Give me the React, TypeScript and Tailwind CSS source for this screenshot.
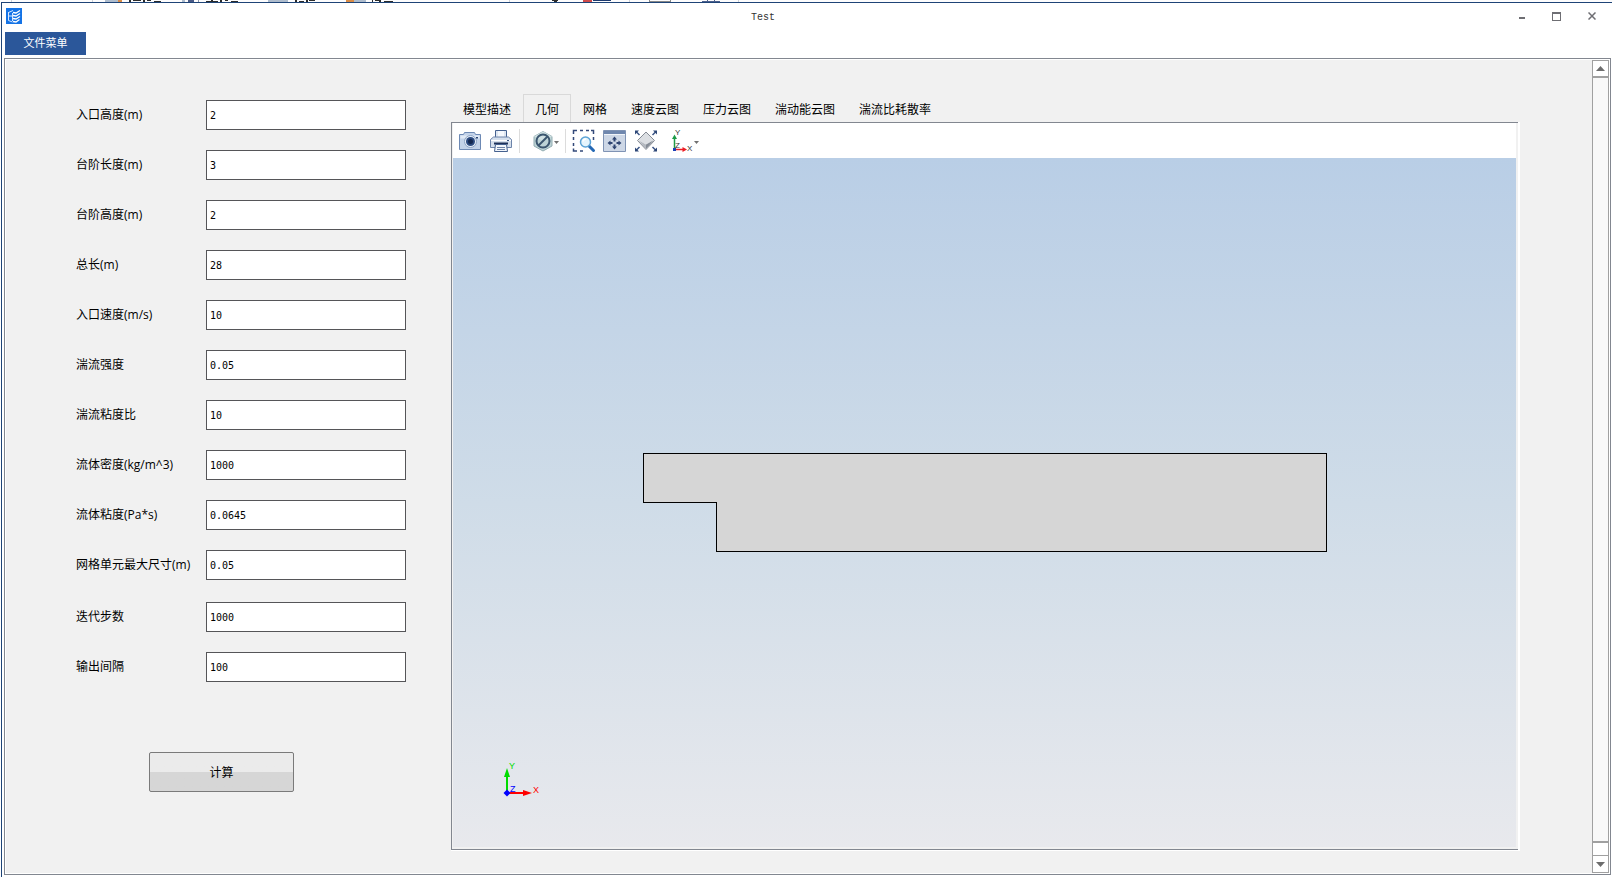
import React, { useState } from 'react';

interface Field {
  id: string;
  label: string;
  value: string;
}

const MODEL_FIELDS: Field[] = [
  { id: 'inletHeight', label: '入口高度(m)', value: '2' },
  { id: 'stepLength', label: '台阶长度(m)', value: '3' },
  { id: 'stepHeight', label: '台阶高度(m)', value: '2' },
  { id: 'totalLength', label: '总长(m)', value: '28' },
  { id: 'inletVelocity', label: '入口速度(m/s)', value: '10' },
  { id: 'turbIntensity', label: '湍流强度', value: '0.05' },
  { id: 'turbViscosity', label: '湍流粘度比', value: '10' },
  { id: 'density', label: '流体密度(kg/m^3)', value: '1000' },
  { id: 'viscosity', label: '流体粘度(Pa*s)', value: '0.0645' },
  { id: 'meshSize', label: '网格单元最大尺寸(m)', value: '0.05' },
];

const SOLVER_FIELDS: Field[] = [
  { id: 'iterations', label: '迭代步数', value: '1000' },
  { id: 'interval', label: '输出间隔', value: '100' },
];

const TABS = ['模型描述', '几何', '网格', '速度云图', '压力云图', '湍动能云图', '湍流比耗散率'];

const FieldRow: React.FC<{ field: Field }> = ({ field }) => (
  <div className="flex h-[30px] items-center">
    <label htmlFor={field.id} className="w-[130px] shrink-0 whitespace-nowrap">
      {field.label}
    </label>
    <input
      id={field.id}
      type="text"
      defaultValue={field.value}
      className="h-[30px] w-[200px] border border-[#555558] bg-white px-[3px] font-['DejaVu_Sans_Mono',monospace] text-[10px] text-black outline-none"
    />
  </div>
);

// Slice of the parent application that shows above the window
const Backdrop: React.FC = () => (
  <svg className="h-[2px] w-full" height="2" aria-hidden="true" shapeRendering="crispEdges">
    <rect width="100%" height="2" fill="#fdfdfe" />
    <path d="M11.5 0v2M92.5 0v2M509.5 0v2M629.5 0v2M738.5 0v2" stroke="#cfd2d8" />
    <path d="M105 0h13v2h-13zM182 0h3v2h-3zM268 0h20v2h-20zM353 0h13v2h-13z" fill="#aebccd" />
    <path d="M118 0h4v2h-4zM346 0h8v2h-8z" fill="#d98b45" />
    <path d="M188 0h6v2h-6z" fill="#4a5a86" />
    <path d="M198 0h1v2h-1z" fill="#8a93a8" />
    <path
      d="M129 0h2v2h-2zM133 0h8v1h-8zM143 0h2v2h-2zM147 0h4v1h-4zM154 1h7v1h-7zM206 1h12v1h-12zM211 0h2v2h-2zM220 0h2v2h-2zM225 0h3v1h-3zM231 1h7v1h-7zM295 0h2v2h-2zM299 1h5v1h-5zM306 0h2v2h-2zM309 0h6v1h-6zM372 0h1v2h-1zM375 0h6v1h-6zM379 0h2v2h-2zM384 1h9v1h-9zM552 0h6v1h-6zM554 1h3v1h-3z"
      fill="#2b2b2b"
    />
    <path d="M583 0h9v2h-9z" fill="#d04a4a" />
    <path d="M593 0h18v1h-18z" fill="#1d3a6e" />
    <path d="M649 0h1v2h-1zM670 0h1v2h-1zM650 1h20v1h-20z" fill="#888" />
    <path d="M702 1h18v1h-18zM707 0h1v2h-1zM714 0h1v2h-1z" fill="#4b5f8c" />
  </svg>
);

const AppLogo: React.FC = () => (
  <svg width="16" height="16" viewBox="0 0 16 16" fill="none" aria-hidden="true">
    <rect width="16" height="16" fill="#1473e6" />
    <path d="M2.5 4v8.500l4 1.500M2.500 4.500L7 2.500M2.500 8h4M6.500 5v8" stroke="#d6e7ff" />
    <path d="M7 4.500l3 .5 4-2.500M7 7.500l3 .5 4-2.500M7 10.500l3 .5 4-2.500M7 13.500l3 .5 3.500-2.500" stroke="#fff" strokeWidth="1.300" />
  </svg>
);

const CameraIcon: React.FC = () => (
  <svg width="24" height="24" viewBox="0 0 24 24" fill="none">
    <path d="M1.500 5.500h4l1-2h10l1 2h5v15h-21z" fill="#c3d3e9" stroke="#6d89b4" />
    <path d="M2.500 6.500h19v3h-19z" fill="#e2ebf6" />
    <circle cx="12.500" cy="12.500" r="6" fill="#e8eff8" stroke="#8ba3c5" />
    <circle cx="12.500" cy="12.500" r="4.500" fill="#2c4b80" />
    <circle cx="12.500" cy="12.500" r="2.500" fill="#142850" />
    <path d="M18 8h2v1.500h-2z" fill="#2b4675" />
  </svg>
);

const PrinterIcon: React.FC = () => (
  <svg width="24" height="24" viewBox="0 0 24 24" fill="none">
    <path d="M6.500 9V1.500h11V9" fill="#f5f8fc" stroke="#45618f" />
    <path d="M8 2v6M16 2v6" stroke="#c5d2e4" />
    <path d="M1.500 10.500l3-2.500h15l3 2.500v8h-21z" fill="#d5dfec" stroke="#6d84aa" />
    <path d="M2 11.500h20" stroke="#fff" />
    <path d="M5 14.500h14" stroke="#1d3159" strokeWidth="2" />
    <path d="M6.500 15.500h11l1 7h-13z" fill="#f2f6fb" stroke="#45618f" />
    <path d="M8 18.500h8M8 20.500h8" stroke="#6c83a8" />
    <path d="M18 11.500h2" stroke="#3a5584" />
  </svg>
);

const HideIcon: React.FC = () => (
  <svg width="33" height="24" viewBox="0 0 33 24" fill="none">
    <path d="M17 2.500l9 5v9.500l-9 5-9-5V7.500z" fill="#bdd3d6" stroke="#93adb2" />
    <path d="M17 2.500l9 5-9 4.500-9-4.500z" fill="#d0e0e2" />
    <circle cx="17" cy="12" r="6.500" stroke="#3b566f" strokeWidth="2" />
    <path d="M12.500 16.500L21.500 7.500" stroke="#3b566f" strokeWidth="2" />
    <path d="M28 12h5l-2.500 3z" fill="#707070" />
  </svg>
);

const ZoomBoxIcon: React.FC = () => (
  <svg width="24" height="24" viewBox="0 0 24 24" fill="none">
    <path
      d="M1.500 5V1.500H5M8 1.500h3M14 1.500h3M19 1.500h2.500V5M1.500 8v3M1.500 14v3M1.500 19.500V22H5M8 22h3M21.500 8v3"
      stroke="#33497a"
      strokeWidth="1.500"
    />
    <path d="M17 17l4.500 4.500" stroke="#2468b4" strokeWidth="3" strokeLinecap="round" />
    <circle cx="13.500" cy="13" r="5" fill="#e5f5fd" stroke="#5ba3d6" strokeWidth="1.500" />
    <path d="M11 12.500a3 3 0 0 1 3-2.500" stroke="#fff" strokeWidth="1.500" />
  </svg>
);

const ExtentsIcon: React.FC = () => (
  <svg width="24" height="24" viewBox="0 0 24 24" fill="none">
    <path d="M.5 1.500h22v21H.5z" fill="#cdd7e6" stroke="#7f93b4" />
    <path d="M1 2h21v3H1z" fill="#6f87ae" />
    <path d="M1 5.500h21" stroke="#f0f4f9" />
    <path d="M11.500 7.500l2.500 3h-1.500v2h-2v-2H9zM11.500 20.500L9 17.500h1.500v-2h2v2H14zM4.500 14L7.500 11.500V13h2v2h-2v1.500zM18.500 14l-3-2.500V13h-2v2h2v1.500z" fill="#2f4573" />
  </svg>
);

const DiamondIcon: React.FC = () => (
  <svg width="24" height="24" viewBox="0 0 24 24" fill="none">
    <path d="M12 3l8 8-8 4.500L4 11z" fill="#dcdfe3" />
    <path d="M4 11l8 4.500V20z" fill="#b3b8bf" />
    <path d="M20 11l-8 4.500V20z" fill="#858c96" />
    <path d="M12 3l8.500 8.500L12 20.500 3.500 11.500z" stroke="#858b94" />
    <path d="M2 2.500l3.500 3.500M22 2.500l-3.500 3.500M2 21.500l3.500-3.500M22 21.500l-3.500-3.500" stroke="#3c5585" strokeWidth="1.500" />
    <path d="M1 1.500h4L1 5.500zM23 1.500v4L19 1.500zM1 22.500v-4l4 4zM23 22.500h-4l4-4z" fill="#2c4677" />
  </svg>
);

const AxesIcon: React.FC = () => (
  <svg width="34" height="24" viewBox="0 0 34 24" fill="none">
    <path d="M9.500 20V9" stroke="#1d9a47" strokeWidth="1.500" />
    <path d="M9.500 5.500L12 10H7z" fill="#1d9a47" />
    <path d="M10 20.500h8" stroke="#ec1c24" strokeWidth="1.500" />
    <path d="M22 20.500L17.500 18v5z" fill="#ec1c24" />
    <path d="M8 19h3v3H8z" fill="#1b3fb5" />
    <g className="font-['Liberation_Sans',sans-serif] text-[8px]" fill="#333">
      <text x="10" y="6">Y</text>
      <text x="10" y="19">Z</text>
      <text x="22" y="22">X</text>
    </g>
    <path d="M29 12h5l-2.500 3z" fill="#707070" />
  </svg>
);

const ToolSeparator: React.FC = () => <div className="-mx-px h-6 w-px bg-[#dcdcdc]" />;

const ToolBar: React.FC = () => (
  <div className="flex h-[35px] items-center gap-[7px] bg-white pl-[5px]">
    <button type="button" aria-label="截图"><CameraIcon /></button>
    <button type="button" aria-label="打印"><PrinterIcon /></button>
    <ToolSeparator />
    <button type="button" aria-label="隐藏"><HideIcon /></button>
    <ToolSeparator />
    <button type="button" aria-label="框选缩放"><ZoomBoxIcon /></button>
    <button type="button" aria-label="缩放到窗口"><ExtentsIcon /></button>
    <button type="button" aria-label="缩放到对象"><DiamondIcon /></button>
    <button type="button" aria-label="视图方向"><AxesIcon /></button>
  </div>
);

const Canvas: React.FC = () => (
  <div className="relative flex flex-1 items-center justify-center bg-linear-to-b from-[#b9cee6] via-[#cfdce8] to-[#e8e9ed]">
    {/* Backward facing step */}
    <svg className="w-[684px] max-w-[90%]" viewBox="0 0 684 99" shapeRendering="crispEdges">
      <path
        d="M.5.5h683v98h-610v-49H.5z"
        fill="#d6d6d6"
        stroke="#000"
        vectorEffect="non-scaling-stroke"
      />
    </svg>

    <svg className="absolute bottom-12 left-12" width="42" height="38" viewBox="0 0 42 38" fill="none">
      <path d="M6 31V14" stroke="#00dc00" strokeWidth="2" />
      <path d="M6 7l3 9H3z" fill="#00dc00" />
      <path d="M6 32h17" stroke="#f00" strokeWidth="2" />
      <path d="M31 32l-9 3v-6z" fill="#f00" />
      <path d="M6 28.500l3.500 3.500L6 35.500 2.500 32z" fill="#00f" />
      <g className="font-['Liberation_Sans',sans-serif] text-[9px]">
        <text x="8" y="8" fill="#00dc00">Y</text>
        <text x="9" y="31" fill="#00f">Z</text>
        <text x="32" y="32" fill="#f00">X</text>
      </g>
    </svg>
  </div>
);

const Viewer: React.FC = () => {
  const [active, setActive] = useState('几何');

  return (
    <div className="flex min-w-0 flex-1 flex-col">
      <div role="tablist" className="flex h-7">
        {TABS.map((tab) => (
          <button
            key={tab}
            type="button"
            role="tab"
            aria-selected={tab === active}
            onClick={() => setActive(tab)}
            className={`border border-b-0 px-[11px] pt-0.5 whitespace-nowrap ${
              tab === active ? 'border-[#d9d9d9]' : 'border-transparent'
            }`}
          >
            {tab}
          </button>
        ))}
      </div>
      <div className="flex flex-1 flex-col border-r-2 border-b border-r-white border-b-white">
        <div className="flex flex-1 flex-col border-t border-b border-l border-[#828790] pr-0.5 pb-0.5 pl-px">
          <ToolBar />
          <Canvas />
        </div>
      </div>
    </div>
  );
};

const ScrollBar: React.FC = () => (
  <div className="flex w-[17px] flex-col border border-[#a0a0a0] bg-white">
    <button type="button" aria-label="向上滚动" className="flex h-[15px] items-center justify-center">
      <svg width="9" height="5" viewBox="0 0 9 5"><path d="M4.500 0L9 5H0z" fill="#6d6d6d" /></svg>
    </button>
    <div className="flex-1 border-y-2 border-[#a0a0a0] bg-[#f8f8f8]" />
    <div className="h-3" />
    <button type="button" aria-label="向下滚动" className="flex h-[17px] items-center justify-center border-t border-[#a0a0a0]">
      <svg width="9" height="5" viewBox="0 0 9 5"><path d="M0 0h9L4.500 5z" fill="#6d6d6d" /></svg>
    </button>
  </div>
);

const TitleBar: React.FC = () => (
  <header className="flex h-[26px] items-center pr-[3px] pl-1">
    <AppLogo />
    <h1 className="flex-1 pt-1 text-center font-['Liberation_Mono',monospace] text-[10px] text-[#333]">Test</h1>
    <button type="button" aria-label="最小化" className="flex h-6 w-[35px] items-center justify-center">
      <svg width="10" height="10" viewBox="0 0 10 10"><path d="M2 6h6v2H2z" fill="#6e6e73" /></svg>
    </button>
    <button type="button" aria-label="最大化" className="flex h-6 w-[35px] items-center justify-center">
      <svg width="9" height="9" viewBox="0 0 9 9" fill="none" shapeRendering="crispEdges">
        <path d="M.5.5h8v8h-8zM0 1.500h9" stroke="#6e6e73" />
      </svg>
    </button>
    <button type="button" aria-label="关闭" className="flex h-6 w-[35px] items-center justify-center">
      <svg width="8" height="8" viewBox="0 0 8 8"><path d="M.5.5l7 7M7.500.5l-7 7" stroke="#6e6e73" strokeWidth="1.500" /></svg>
    </button>
  </header>
);

export default function App() {
  return (
    <div className="flex min-h-screen flex-col bg-white font-['Open_Sans','Noto_Sans_CJK_SC',sans-serif] text-xs text-black">
      <Backdrop />
      <div className="ml-px flex flex-1 flex-col border-t border-l border-[#1e4477] pb-0.5">
        <TitleBar />
        <nav className="mt-[3px] mb-[3px] flex pl-[3px]">
          <button type="button" className="h-[23px] w-[81px] bg-[#2b579a] text-[11px] text-white">
            文件菜单
          </button>
        </nav>

        <main className="mr-px ml-0.5 flex flex-1 flex-col border border-[#828790]">
          <div className="flex flex-1 border border-white bg-[#f1f1f1]">
            <form className="mr-[45px] flex shrink-0 flex-col pt-10 pb-20 pl-[70px]">
              <div className="flex flex-col gap-5">
                {MODEL_FIELDS.map((field) => (
                  <FieldRow key={field.id} field={field} />
                ))}
              </div>
              <div className="mt-[22px] flex flex-col gap-5">
                {SOLVER_FIELDS.map((field) => (
                  <FieldRow key={field.id} field={field} />
                ))}
              </div>
              <button
                type="button"
                className="mt-[70px] ml-[73px] h-10 w-[145px] rounded-[2px] border border-[#7a7a7a] bg-linear-to-b from-[#ebebeb] from-50% to-[#d6d6d6] to-50% pt-0.5"
              >
                计算
              </button>
            </form>

            <div className="flex min-w-0 flex-1 pt-[34px] pr-[72px] pb-[22px]">
              <Viewer />
            </div>

            <ScrollBar />
          </div>
        </main>
      </div>
    </div>
  );
}
